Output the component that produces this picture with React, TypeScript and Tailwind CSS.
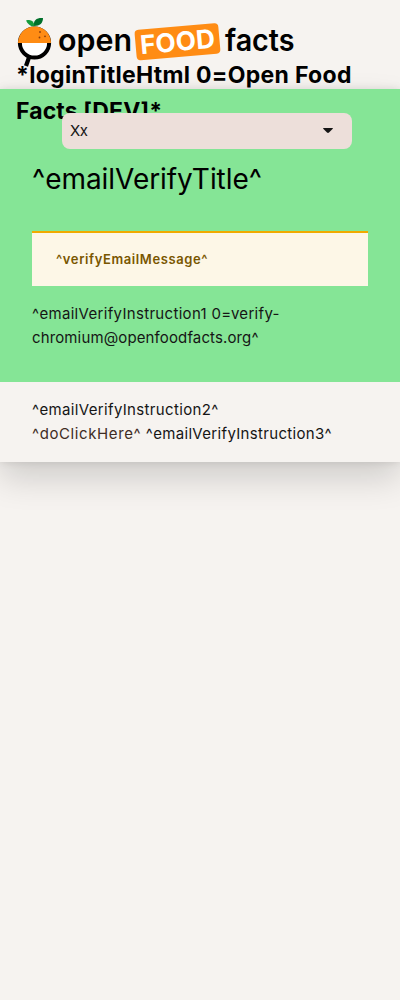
function Logo() {
  return (
    <svg className="block h-[54px] w-[320px] shrink-0" viewBox="16 14 320 54" fill="none" role="img" aria-label="open food facts">
      <path d="M29.5 56L26 66" stroke="#000" strokeWidth="4.2" />
      <circle cx="34.5" cy="43" r="14.6" fill="#fff" stroke="#000" strokeWidth="4" />
      <path d="M18 43a16.5 16.5 0 0 1 33 0Z" fill="#ff8c14" />
      <path d="M34 26C33 20 37 17.5 43 18C43 23 40 26 34 26Z" fill="#00702b" />
      <path d="M34.5 26C32 27 28 25 26 20.5C31 19 34 21 34.5 26Z" fill="#169b3b" />
      <g fill="#8b3d0b">
        <circle cx="40" cy="32" r=".9" />
        <circle cx="45" cy="36.3" r=".9" />
        <circle cx="39.5" cy="37.5" r=".9" />
      </g>
      <g fontFamily="Inter, sans-serif" fontWeight="600">
        <text x="58" y="50.8" fill="#000" fontSize="30.5" textLength="74" lengthAdjust="spacingAndGlyphs">open</text>
        <g transform="rotate(-5 177.5 42)">
          <rect x="135.5" y="26.5" width="84" height="30.5" rx="4" fill="#ff8c14" />
          <text x="140" y="51" fill="#fff" fontSize="26" fontWeight="700" textLength="75" lengthAdjust="spacingAndGlyphs">FOOD</text>
        </g>
        <text x="225" y="50.8" fill="#000" fontSize="30" textLength="69.5" lengthAdjust="spacingAndGlyphs">facts</text>
      </g>
    </svg>
  );
}

export default function App() {
  return (
    <div className="min-h-[1000px] overflow-hidden bg-[#f6f3f0] font-['Inter',sans-serif] text-[#151515]">
      <header className="relative z-10 flex h-[89px] flex-col px-4 pt-3.5">
        <Logo />
        <h1 className="-mt-[11px] text-[23px] leading-9 font-bold whitespace-nowrap text-black">
          <span className="block tracking-[0.3px]">*loginTitleHtml 0=Open Food</span>
          <span className="block tracking-[0.1px]">Facts [DEV]*</span>
        </h1>
      </header>
      <main className="shadow-[0_16px_32px_0_rgba(3,3,3,0.16),0_0_8px_0_rgba(3,3,3,0.1)]">
        <section className="flex h-[293px] flex-col bg-[#85e596] px-8 pt-6">
          <button className="relative z-20 mr-4 ml-[30px] flex h-9 shrink-0 items-center justify-between rounded-lg bg-[#eddfda] pr-[19px] pl-2 text-[15px] tracking-[-0.5px]">
            <span>Xx</span>
            <svg className="mb-0.5 h-[5px] w-2.5" viewBox="0 0 10 5" fill="#151515">
              <path d="M0 .6Q0 0 .7 0H9.3Q10 0 10 .6L6 4.6Q5 5.3 4 4.6Z" />
            </svg>
          </button>
          <h2 className="mt-3 text-[28px] leading-9 font-normal tracking-[-0.05px] whitespace-nowrap text-black">^emailVerifyTitle^</h2>
          <div className="mt-[34px] flex h-[55px] shrink-0 items-center border-t-2 border-[#f0ab00] bg-[#fdf7e7] px-6 text-[13px] font-semibold text-[#795600]">
            <span className="tracking-[0.6px]">^verifyEmailMessage^</span>
          </div>
          <p className="mt-4 text-[15px] leading-6 whitespace-nowrap">
            <span className="block tracking-[0.32px]">^emailVerifyInstruction1 0=verify-</span>
            <span className="block tracking-[0.13px]">chromium@openfoodfacts.org^</span>
          </p>
        </section>
        <section className="h-20 bg-[#f6f3f0] px-8 py-4 text-[15px] leading-6 whitespace-nowrap">
          <p className="tracking-[0.35px]">^emailVerifyInstruction2^</p>
          <p className="tracking-[0.33px]">
            <a href="#" className="tracking-[0.6px] text-[#402c24]">^doClickHere^</a> ^emailVerifyInstruction3^
          </p>
        </section>
      </main>
    </div>
  );
}
